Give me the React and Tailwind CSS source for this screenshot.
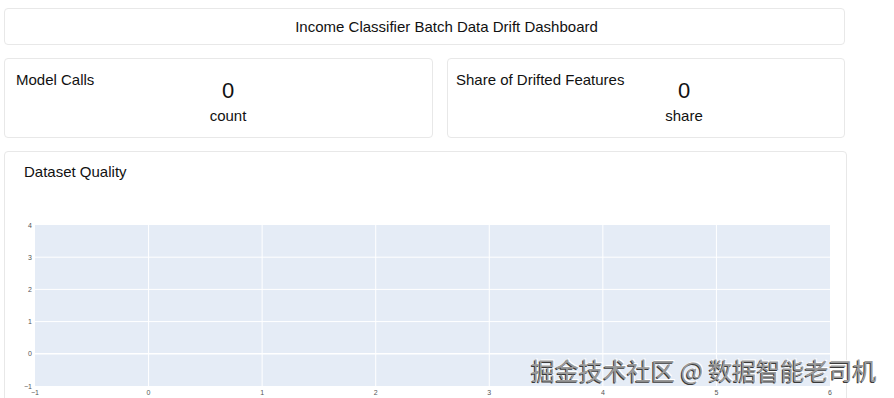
import React from "react";

const X0 = 30;
const XS = 113.57;
const Y4 = 35;
const YS = 32.2;

function Chart() {
  const xs = [-1, 0, 1, 2, 3, 4, 5, 6];
  const ys = [4, 3, 2, 1, 0, -1];
  const xp = (v) => X0 + (v + 1) * XS;
  const yp = (v) => Y4 + (4 - v) * YS;
  return (
    <svg width="841" height="230" className="block">
      <rect x={X0} y={Y4} width={XS * 7} height={YS * 5} fill="#e5ecf6" />
      {[0, 1, 2, 3, 4, 5].map((v) => (
        <line key={"vx" + v} x1={xp(v)} x2={xp(v)} y1={Y4} y2={Y4 + YS * 5} stroke="#ffffff" strokeWidth="1" />
      ))}
      {[3, 2, 1, 0].map((v) => (
        <line key={"hy" + v} x1={X0} x2={X0 + XS * 7} y1={yp(v)} y2={yp(v)} stroke="#ffffff" strokeWidth={v === 0 ? 1.5 : 1} />
      ))}
      {ys.map((v) => (
        <text key={"ty" + v} x={27} y={yp(v) + 2.5} fontSize="7" fill="#555" textAnchor="end" fontFamily="Liberation Sans, Arial, sans-serif">
          {v === -1 ? "\u22121" : v}
        </text>
      ))}
      {xs.map((v) => (
        <text key={"tx" + v} x={xp(v)} y={Y4 + YS * 5 + 9} fontSize="7" fill="#555" textAnchor="middle" fontFamily="Liberation Sans, Arial, sans-serif">
          {v === -1 ? "\u22121" : v}
        </text>
      ))}
    </svg>
  );
}

export default function App() {
  return (
    <div className="relative w-[894px] h-[398px] overflow-hidden bg-white font-['Liberation_Sans',Arial,sans-serif] text-[#111]">
      <div className="pt-[8px] pl-[4px] flex flex-col gap-[13px]">
        <div className="w-[841px] h-[37px] border border-[#e8e8e8] rounded-[4px] flex items-center justify-center pl-[44px] text-[15px] pt-[2px]">
          Income Classifier Batch Data Drift Dashboard
        </div>
        <div className="flex gap-[14px]">
          <div className="w-[429px] h-[80px] border border-[#e8e8e8] rounded-[4px] flex pl-[11px] pt-[11px]">
            <div className="w-[152px] text-[15px] leading-[20px]">Model Calls</div>
            <div className="w-[120px] flex flex-col items-center pt-[8px]">
              <div className="text-[22px] leading-[26px]">0</div>
              <div className="text-[15px] leading-[20px] mt-[2px]">count</div>
            </div>
          </div>
          <div className="w-[398px] h-[80px] border border-[#e8e8e8] rounded-[4px] flex pl-[8px] pt-[11px]">
            <div className="w-[178px] text-[15px] leading-[20px]">Share of Drifted Features</div>
            <div className="w-[100px] flex flex-col items-center pt-[8px]">
              <div className="text-[22px] leading-[26px]">0</div>
              <div className="text-[15px] leading-[20px] mt-[2px]">share</div>
            </div>
          </div>
        </div>
        <div className="w-[843px] h-[270px] border border-[#e8e8e8] rounded-[4px] pt-[10px]">
          <div className="pl-[19px] text-[15px] leading-[20px]">Dataset Quality</div>
          <div className="mt-[8px]">
            <Chart />
          </div>
        </div>
      </div>
      <div className="absolute left-[531px] top-[354px] text-[24px] leading-[32px] whitespace-nowrap text-[#9a9a9a] font-['Noto_Sans_CJK_SC',sans-serif] [text-shadow:-1px_1px_0_#3a3a3a,1px_-1px_0_#ffffff]">
        掘金技术社区 @ 数据智能老司机
      </div>
    </div>
  );
}
